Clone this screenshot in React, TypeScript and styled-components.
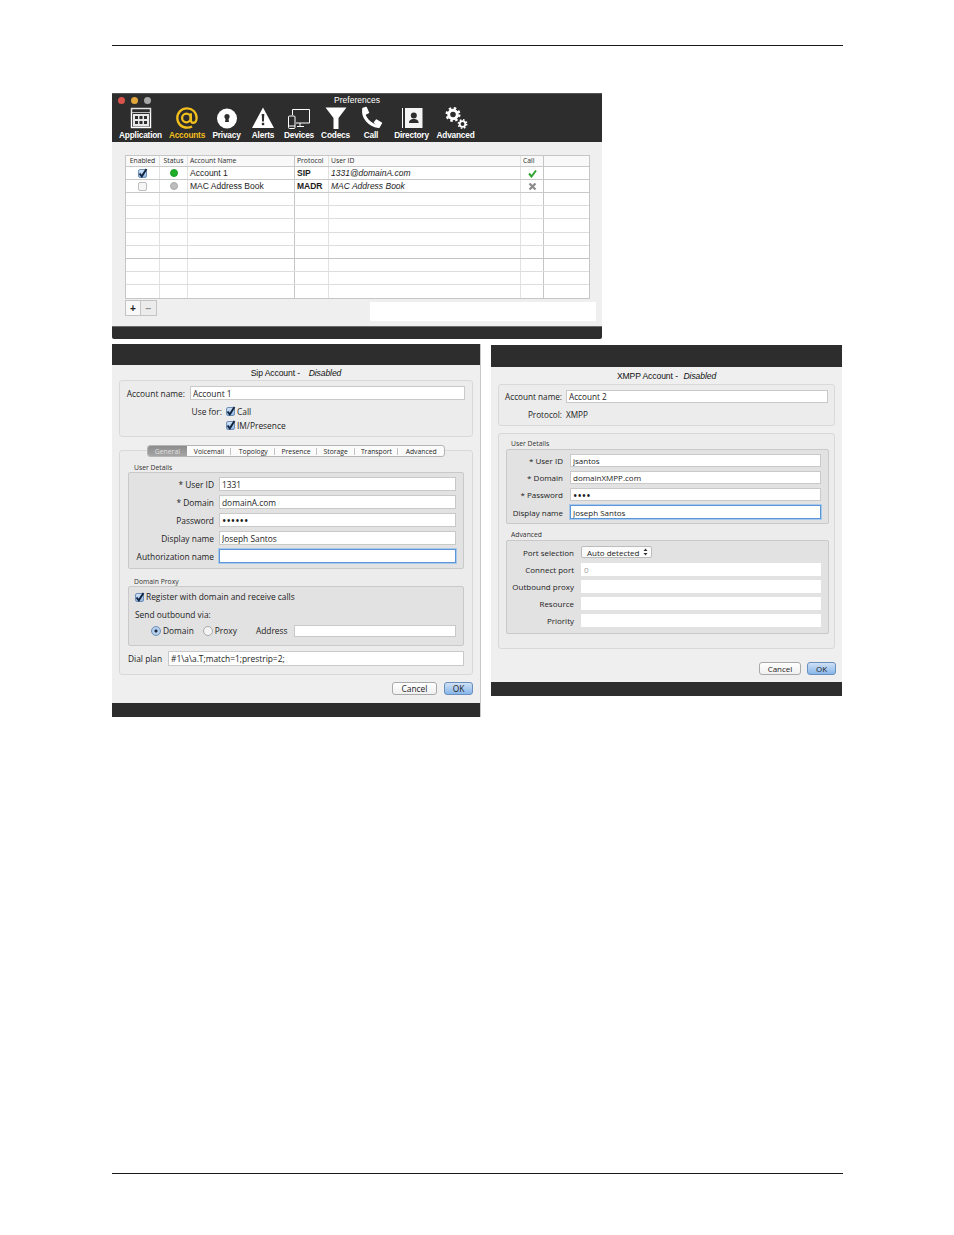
import React from 'react';
import styled, {createGlobalStyle} from 'styled-components';

const GlobalStyle = createGlobalStyle`
  html, body {
    margin: 0;
    padding: 0;
    background: #ffffff;
  }

  * {
    box-sizing: border-box;
  }
`

const uiFont = `"Open Sans", "Noto Sans", sans-serif`;
const headFont = `"Liberation Sans", Arial, sans-serif`;

function AtIcon() {
    return <svg width="24" height="24" viewBox="0 0 24 24" fill="none" stroke="#f2bf1d" strokeWidth="2.3">
        <circle cx="11.4" cy="12" r="4.3"/>
        <path d="M15.8 7.2v6.6c0 2 1 3 2.4 3 2 0 3.4-2 3.4-5C21.6 6.4 17.3 2.3 12 2.3 6.5 2.3 2.3 6.6 2.3 12S6.5 21.7 12 21.7c2 0 3.7-.5 5-1.3"/>
    </svg>;
}

function ApplicationIcon() {
    return <svg width="24" height="24" viewBox="0 0 24 24">
        <rect x="2.5" y="2.5" width="19" height="19" fill="none" stroke="#fff" strokeWidth="1.4"/>
        <rect x="2.5" y="2.5" width="19" height="4" fill="none" stroke="#ddd" strokeWidth="0.8"/>
        <rect x="4" y="8" width="16" height="12.5" fill="#e8e8e8"/>
        {[6, 10.5, 15].map((x) => [10, 15].map((y) =>
            <rect key={x + "-" + y} x={x} y={y} width="3" height="3" fill="#2d2d2d"/>))}
    </svg>;
}

function PrivacyIcon() {
    return <svg width="24" height="24" viewBox="0 0 24 24">
        <circle cx="12" cy="12.5" r="10" fill="#fff"/>
        <circle cx="12" cy="10.5" r="2.6" fill="#2d2d2d"/>
        <path d="M10.8 11h2.4l.8 5h-4z" fill="#2d2d2d"/>
    </svg>;
}

function AlertIcon() {
    return <svg width="24" height="24" viewBox="0 0 24 24">
        <path d="M12 1.5 23 22H1z" fill="#fff"/>
        <path d="M10.7 8h2.6l-.4 7.500h-1.800z" fill="#2d2d2d"/>
        <rect x="10.800" y="16.800" width="2.400" height="2.400" fill="#2d2d2d"/>
    </svg>;
}

function DevicesIcon() {
    return <svg width="24" height="24" viewBox="0 0 24 24" fill="none" stroke="#fff" strokeWidth="1">
        <path d="M5.500 9V3.500h17v13.500H9"/>
        <path d="M13 17v3M10 20.500h7"/>
        <rect x="1.500" y="10" width="6.500" height="12.500" rx="1" fill="#2d2d2d"/>
        <path d="M1.500 20h6.500"/>
    </svg>;
}

function FunnelIcon() {
    return <svg width="24" height="24" viewBox="0 0 24 24">
        <path d="M1.500 1.500h21L14.500 12v11h-5V12z" fill="#fff"/>
    </svg>;
}

function PhoneIcon() {
    return <svg width="24" height="24" viewBox="0 0 24 24" fill="none" stroke="#fff" strokeLinecap="round">
        <path d="M4.800 3.500C3.500 11 10 19 19.500 20.500" strokeWidth="3.200"/>
        <path d="M4 2.500l3.200-1 2.300 5.200-3.200 1.500z" fill="#fff" strokeWidth="1.400" strokeLinejoin="round"/>
        <path d="M15.500 16.500l2-2.500 5 3-2 3.500z" fill="#fff" strokeWidth="1.400" strokeLinejoin="round"/>
    </svg>;
}

function DirectoryIcon() {
    return <svg width="24" height="24" viewBox="0 0 24 24">
        <rect x="2" y="2" width="1" height="20" fill="#fff"/>
        <rect x="5" y="2" width="17.500" height="20" fill="#f4f4f4"/>
        <circle cx="13.800" cy="9.500" r="3" fill="#2d2d2d"/>
        <path d="M9 17c0-3 2-4 4.800-4s4.800 1 4.800 4z" fill="#2d2d2d"/>
    </svg>;
}

function GearsIcon() {
    return <svg width="24" height="24" viewBox="0 0 24 24" fill="none" stroke="#fff">
        <circle cx="9" cy="8.500" r="4.300" strokeWidth="3"/>
        <circle cx="9" cy="8.500" r="6.400" strokeWidth="2.200" strokeDasharray="2.500 2.530"/>
        <circle cx="18.500" cy="18" r="2.800" strokeWidth="1.800"/>
        <circle cx="18.500" cy="18" r="4.200" strokeWidth="1.500" strokeDasharray="1.650 1.650"/>
    </svg>;
}

function CheckMark() {
    return <svg width="11" height="11" viewBox="0 0 11 11" fill="none" stroke="#12233f" strokeWidth="1.900">
        <path d="M2.500 5.500 4.800 8.300 9.500 1"/>
    </svg>;
}

function UpDownArrows() {
    return <svg width="5" height="8" viewBox="0 0 5 8" fill="#333333">
        <path d="M2.500 0.500 4.500 3H.5zM2.500 7.500 .5 5h4z"/>
    </svg>;
}

const tools = [
    {label: "Application", width: 47, icon: <ApplicationIcon/>},
    {label: "Accounts", width: 46, icon: <AtIcon/>, active: true},
    {label: "Privacy", width: 33, icon: <PrivacyIcon/>},
    {label: "Alerts", width: 40, icon: <AlertIcon/>},
    {label: "Devices", width: 32, icon: <DevicesIcon/>},
    {label: "Codecs", width: 41, icon: <FunnelIcon/>},
    {label: "Call", width: 30, icon: <PhoneIcon/>},
    {label: "Directory", width: 51, icon: <DirectoryIcon/>},
    {label: "Advanced", width: 37, icon: <GearsIcon/>},
];

const tabs = [
    {label: "General", width: 39},
    {label: "Voicemail", width: 45},
    {label: "Topology", width: 44},
    {label: "Presence", width: 42},
    {label: "Storage", width: 38},
    {label: "Transport", width: 44},
    {label: "Advanced", width: 46},
];

const emptyRowHeights = [13, 13, 14, 13, 13, 13, 13, 14];

function StatusCells(props: { name: string, protocol: string, user: string, enabled: boolean }) {
    return <>
        <Cell $center><CheckBox $checked={props.enabled}>{props.enabled && <CheckMark/>}</CheckBox></Cell>
        <Cell $center><StatusDot $on={props.enabled}/></Cell>
        <Cell>{props.name}</Cell>
        <Cell $bold>{props.protocol}</Cell>
        <Cell $italic>{props.user}</Cell>
        <Cell $center>
            {props.enabled
                ? <svg width="9" height="9" viewBox="0 0 9 9" fill="none" stroke="#2fa52f" strokeWidth="2">
                    <path d="M1 4.500 3.500 7.500 8 1.500"/>
                </svg>
                : <svg width="9" height="9" viewBox="0 0 9 9" fill="none" stroke="#8b8b8b" strokeWidth="2.200">
                    <path d="M1.500 1.500 7.500 7.500M7.500 1.500 1.500 7.500"/>
                </svg>}
        </Cell>
        <Cell/>
    </>;
}

export default function App() {
    return <>
        <GlobalStyle/>
        <Page>
            <Rule/>
            <PrefsWindow>
                <PrefsHeader>
                    <TitleBar>
                        <Lights>
                            <Light $color="#d9534a"/>
                            <Light $color="#e0a63c"/>
                            <Light $color="#a8a8a8"/>
                        </Lights>
                        <span>Preferences</span>
                    </TitleBar>
                    <Toolbar>
                        {tools.map((tool) =>
                            <Tool key={tool.label} $width={tool.width} $active={tool.active}>
                                {tool.icon}
                                <span>{tool.label}</span>
                            </Tool>)}
                    </Toolbar>
                </PrefsHeader>
                <PrefsBody>
                    <AccountTable>
                        <TableRow $height={11}>
                            <HeadCell $center>Enabled</HeadCell>
                            <HeadCell $center>Status</HeadCell>
                            <HeadCell>Account Name</HeadCell>
                            <HeadCell>Protocol</HeadCell>
                            <HeadCell>User ID</HeadCell>
                            <HeadCell>Call</HeadCell>
                            <HeadCell/>
                        </TableRow>
                        <TableRow $height={13}>
                            <StatusCells enabled name="Account 1" protocol="SIP" user="1331@domainA.com"/>
                        </TableRow>
                        <TableRow $height={13}>
                            <StatusCells enabled={false} name="MAC Address Book" protocol="MADR"
                                         user="MAC Address Book"/>
                        </TableRow>
                        {emptyRowHeights.map((height, i) =>
                            <TableRow key={i} $height={height} $strong={i === 4}>
                                <Cell/><Cell/><Cell/><Cell/><Cell/><Cell/><Cell/>
                            </TableRow>)}
                    </AccountTable>
                    <TableFooter>
                        <AddRemove>
                            <SquareButton>+</SquareButton>
                            <SquareButton $muted>−</SquareButton>
                        </AddRemove>
                        <BlankedOut/>
                    </TableFooter>
                </PrefsBody>
                <WindowFooter/>
            </PrefsWindow>

            <DialogRow>
                <SipWindow>
                    <DarkBar $height={21}/>
                    <DialogBody $size={8.4}>
                        <DialogTitle $height={15} $gap={4}>Sip Account -&nbsp; <em>Disabled</em></DialogTitle>
                        <SipNameGroup>
                            <SipNameRow>
                                <FieldLabel>Account name:</FieldLabel>
                                <TextBox readOnly defaultValue="Account 1"/>
                            </SipNameRow>
                            <UseForRow>
                                <FieldLabel>Use for:</FieldLabel>
                                <CheckLine>
                                    <CheckBox $checked><CheckMark/></CheckBox>
                                    <span>Call</span>
                                </CheckLine>
                            </UseForRow>
                            <UseForRow>
                                <span/>
                                <CheckLine>
                                    <CheckBox $checked><CheckMark/></CheckBox>
                                    <span>IM/Presence</span>
                                </CheckLine>
                            </UseForRow>
                        </SipNameGroup>
                        <TabGroup>
                            <TabStrip>
                                {tabs.map((tab, i) =>
                                    <Tab key={tab.label} $width={tab.width} $selected={i === 0}>{tab.label}</Tab>)}
                            </TabStrip>
                            <SectionLabel $indent={6} $top={6} $height={9}>User Details</SectionLabel>
                            <SipDetailsPanel>
                                <SipField>
                                    <FieldLabel>* User ID</FieldLabel>
                                    <TextBox readOnly defaultValue="1331"/>
                                </SipField>
                                <SipField>
                                    <FieldLabel>* Domain</FieldLabel>
                                    <TextBox readOnly defaultValue="domainA.com"/>
                                </SipField>
                                <SipField>
                                    <FieldLabel>Password</FieldLabel>
                                    <PasswordBox readOnly type="password" defaultValue="123456"/>
                                </SipField>
                                <SipField>
                                    <FieldLabel>Display name</FieldLabel>
                                    <TextBox readOnly defaultValue="Joseph Santos"/>
                                </SipField>
                                <SipField>
                                    <FieldLabel>Authorization name</FieldLabel>
                                    <TextBox readOnly $focused/>
                                </SipField>
                            </SipDetailsPanel>
                            <SectionLabel $indent={6} $top={8} $height={9}>Domain Proxy</SectionLabel>
                            <ProxyPanel>
                                <ProxyLine>
                                    <CheckBox $checked><CheckMark/></CheckBox>
                                    <PlainText>Register with domain and receive calls</PlainText>
                                </ProxyLine>
                                <PlainText>Send outbound via:</PlainText>
                                <RadioLine>
                                    <Radio $selected/>
                                    <PlainText>Domain</PlainText>
                                    <Radio/>
                                    <PlainText>Proxy</PlainText>
                                    <AddressLabel>Address</AddressLabel>
                                    <TextBox readOnly/>
                                </RadioLine>
                            </ProxyPanel>
                            <DialPlanRow>
                                <PlainText>Dial plan</PlainText>
                                <TextBox readOnly defaultValue="#1\a\a.T;match=1;prestrip=2;"/>
                            </DialPlanRow>
                        </TabGroup>
                        <ButtonRow $top={7} $bottom={8} $right={7} $gap={7}>
                            <DialogButton $width={45}>Cancel</DialogButton>
                            <DialogButton $width={29} $primary>OK</DialogButton>
                        </ButtonRow>
                    </DialogBody>
                    <DarkBar $height={14}/>
                </SipWindow>

                <XmppWindow>
                    <DarkBar $height={22}/>
                    <DialogBody $size={8}>
                        <DialogTitle $height={17} $gap={1}>XMPP Account -&nbsp; <em>Disabled</em></DialogTitle>
                        <XmppNameGroup>
                            <XmppNameRow>
                                <FieldLabel>Account name:</FieldLabel>
                                <TextBox readOnly defaultValue="Account 2"/>
                            </XmppNameRow>
                            <XmppNameRow>
                                <FieldLabel>Protocol:</FieldLabel>
                                <PlainText>XMPP</PlainText>
                            </XmppNameRow>
                        </XmppNameGroup>
                        <XmppGroup>
                            <SectionLabel $indent={5} $top={5} $height={10}>User Details</SectionLabel>
                            <XmppDetailsPanel>
                                <XmppField>
                                    <FieldLabel>* User ID</FieldLabel>
                                    <TextBox readOnly defaultValue="jsantos"/>
                                </XmppField>
                                <XmppField>
                                    <FieldLabel>* Domain</FieldLabel>
                                    <TextBox readOnly defaultValue="domainXMPP.com"/>
                                </XmppField>
                                <XmppField>
                                    <FieldLabel>* Password</FieldLabel>
                                    <PasswordBox readOnly type="password" defaultValue="1234"/>
                                </XmppField>
                                <XmppField>
                                    <FieldLabel>Display name</FieldLabel>
                                    <TextBox readOnly $focused defaultValue="Joseph Santos"/>
                                </XmppField>
                            </XmppDetailsPanel>
                            <SectionLabel $indent={5} $top={6} $height={10}>Advanced</SectionLabel>
                            <XmppAdvancedPanel>
                                <AdvancedField>
                                    <FieldLabel>Port selection</FieldLabel>
                                    <SelectBox>Auto detected <UpDownArrows/></SelectBox>
                                </AdvancedField>
                                <AdvancedField>
                                    <FieldLabel>Connect port</FieldLabel>
                                    <FlatBox readOnly defaultValue="0"/>
                                </AdvancedField>
                                <AdvancedField>
                                    <FieldLabel>Outbound proxy</FieldLabel>
                                    <FlatBox readOnly/>
                                </AdvancedField>
                                <AdvancedField>
                                    <FieldLabel>Resource</FieldLabel>
                                    <FlatBox readOnly/>
                                </AdvancedField>
                                <AdvancedField>
                                    <FieldLabel>Priority</FieldLabel>
                                    <FlatBox readOnly/>
                                </AdvancedField>
                            </XmppAdvancedPanel>
                        </XmppGroup>
                        <ButtonRow $top={13} $bottom={7} $right={6} $gap={6}>
                            <DialogButton $width={42}>Cancel</DialogButton>
                            <DialogButton $width={29} $primary>OK</DialogButton>
                        </ButtonRow>
                    </DialogBody>
                    <DarkBar $height={14}/>
                </XmppWindow>
            </DialogRow>
            <Spacer/>
            <Rule/>
        </Page>
    </>;
}

const Page = styled.div`
  width: 954px;
  height: 1235px;
  padding: 45px 111px 61px 112px;
  display: flex;
  flex-direction: column;
  background: #ffffff;
  color: #1c1c1c;
`

const Rule = styled.div`
  height: 1px;
  background: #1a1a1a;
  flex: none;
`

const Spacer = styled.div`
  flex: 1;
`

const PrefsWindow = styled.section`
  width: 490px;
  margin-top: 47px;
  display: flex;
  flex-direction: column;
`

const PrefsHeader = styled.header`
  height: 49px;
  background: #2d2d2d;
  border-top: 1px solid #555555;
  color: #ffffff;
  font-family: ${headFont};
`

const TitleBar = styled.div`
  height: 12px;
  display: grid;
  grid-template-columns: 1fr auto 1fr;
  align-items: center;
  padding-top: 1px;
  font-size: 8.5px;
  line-height: 11px;
  text-align: center;
`

const Lights = styled.div`
  display: flex;
  gap: 6px;
  padding-left: 6px;
`

const Light = styled.span<{ $color: string }>`
  width: 7px;
  height: 7px;
  border-radius: 50%;
  background: ${(p) => p.$color};
`

const Toolbar = styled.nav`
  display: flex;
  padding-left: 5px;
`

const Tool = styled.div<{ $width: number, $active?: boolean }>`
  width: ${(p) => p.$width}px;
  display: flex;
  flex-direction: column;
  align-items: center;
  color: ${(p) => p.$active ? "#f2bf1d" : "#ffffff"};
  font-size: 8.3px;
  font-weight: 700;
  line-height: 11px;
  letter-spacing: -0.2px;
  white-space: nowrap;
`

const PrefsBody = styled.div`
  height: 184px;
  padding: 13px 6px 0 13px;
  background: #efefef;
`

const AccountTable = styled.div`
  width: 465px;
  border: 1px solid #c6c6c6;
  background: #ffffff;
  font-family: ${headFont};
`

const TableRow = styled.div<{ $height: number, $strong?: boolean }>`
  height: ${(p) => p.$height}px;
  display: grid;
  grid-template-columns: 34px 28px 107px 34px 192px 23px 1fr;
  border-bottom: 1px solid ${(p) => p.$strong ? "#c4c4c4" : "#dddddd"};

  &:nth-child(-n+3) {
    border-bottom-color: #c9c9c9;
  }

  &:last-child {
    height: ${(p) => p.$height - 1}px;
    border-bottom: none;
  }

  & > *:nth-child(3), & > *:nth-child(6) {
    border-right-color: #c6c6c6;
  }

  & > *:last-child {
    border-right: none;
  }
`

const Cell = styled.div<{ $center?: boolean, $bold?: boolean, $italic?: boolean }>`
  min-width: 0;
  padding: 0 ${(p) => p.$center ? 0 : 2}px;
  display: flex;
  align-items: center;
  justify-content: ${(p) => p.$center ? "center" : "flex-start"};
  border-right: 1px solid #e2e2e2;
  font-size: 8.5px;
  font-weight: ${(p) => p.$bold ? 700 : 400};
  font-style: ${(p) => p.$italic ? "italic" : "normal"};
  white-space: nowrap;
`

const HeadCell = styled(Cell)`
  padding-bottom: 1px;
  font-family: ${uiFont};
  font-size: 6.8px;
  color: #2c2c2c;
  background: #f9f9f9;
`

const StatusDot = styled.span<{ $on: boolean }>`
  width: 8px;
  height: 8px;
  border-radius: 50%;
  background: ${(p) => p.$on ? "#1fae2a" : "#bdbdbd"};
  border: 1px solid ${(p) => p.$on ? "#1c9c26" : "#a9a9a9"};
`

const TableFooter = styled.div`
  display: flex;
  justify-content: space-between;
  align-items: flex-start;
  margin-top: 1px;
`

const AddRemove = styled.div`
  display: flex;
  border: 1px solid #c4c4c4;
  height: 16px;
`

const SquareButton = styled.div<{ $muted?: boolean }>`
  width: 15px;
  display: flex;
  align-items: center;
  justify-content: center;
  border-right: 1px solid #c4c4c4;
  background: ${(p) => p.$muted ? "#ececec" : "#f8f8f8"};
  color: ${(p) => p.$muted ? "#8a8a8a" : "#222222"};
  font-family: ${headFont};
  font-size: 10px;
  font-weight: 700;

  &:last-child {
    border-right: none;
  }
`

const BlankedOut = styled.div`
  width: 226px;
  height: 19px;
  margin-top: 2px;
  background: #ffffff;
`

const WindowFooter = styled.footer`
  height: 13px;
  background: #2d2d2d;
  border-top: 1px solid #6b6b6b;
  border-radius: 0 0 2px 2px;
`

const DialogRow = styled.div`
  display: flex;
  align-items: flex-start;
  gap: 10px;
  margin-top: 5px;
`

const SipWindow = styled.section`
  width: 369px;
  display: flex;
  flex-direction: column;
  border-right: 1px solid #c9c9c9;
`

const XmppWindow = styled.section`
  width: 351px;
  margin-top: 1px;
  display: flex;
  flex-direction: column;
`

const DarkBar = styled.div<{ $height: number }>`
  height: ${(p) => p.$height}px;
  background: #2d2d2d;
`

const DialogBody = styled.div<{ $size: number }>`
  background: #efefef;
  font-family: ${uiFont};
  font-size: ${(p) => p.$size}px;
`

const DialogTitle = styled.div<{ $height: number, $gap: number }>`
  height: ${(p) => p.$height}px;
  display: flex;
  align-items: center;
  justify-content: center;
  white-space: pre;
  font-family: ${headFont};
  font-size: 8.6px;
  letter-spacing: -0.1px;
  color: #111111;

  em {
    margin-left: ${(p) => p.$gap}px;
  }
`

const GroupBox = styled.div`
  border: 1px solid #d9d9d9;
  border-radius: 3px;
  background: #ececec;
`

const SipNameGroup = styled(GroupBox)`
  height: 57px;
  margin: 0 7px;
  padding: 5px 7px 0 0;
`

const SipNameRow = styled.div`
  display: grid;
  grid-template-columns: 65px 1fr;
  gap: 5px;
  align-items: center;
  height: 14px;
`

const UseForRow = styled.div`
  display: grid;
  grid-template-columns: 102px 1fr;
  gap: 4px;
  align-items: center;
  height: 14px;

  ${SipNameRow} + & {
    margin-top: 4px;
  }
`

const FieldLabel = styled.span`
  text-align: right;
  white-space: nowrap;
  color: #1c1c1c;
`

const PlainText = styled.span`
  white-space: nowrap;
  color: #1c1c1c;
`

const TextBox = styled.input<{ $focused?: boolean }>`
  width: 100%;
  height: 100%;
  min-width: 0;
  margin: 0;
  padding: 0 2px;
  border: 1px solid ${(p) => p.$focused ? "#5d96d6" : "#c9c9c9"};
  box-shadow: ${(p) => p.$focused ? "0 0 0 1px #a9c9ec" : "none"};
  background: #ffffff;
  outline: none;
  color: #1c1c1c;
  font-family: ${uiFont};
  font-size: inherit;
`

const PasswordBox = styled(TextBox)`
  font-size: 11.7px;
`

const FlatBox = styled(TextBox)`
  border-color: #ffffff;
  color: #9a9a9a;
`

const CheckBox = styled.span<{ $checked?: boolean }>`
  flex: none;
  width: 9px;
  height: 9px;
  display: inline-flex;
  align-items: center;
  justify-content: center;
  border: 1px solid ${(p) => p.$checked ? "#6f8fb5" : "#bdbdbd"};
  border-radius: 2px;
  background: ${(p) => p.$checked ? "linear-gradient(#cfe2f6, #8fb8e4)" : "#f6f6f6"};

  svg {
    flex: none;
  }
`

const CheckLine = styled.div`
  display: flex;
  align-items: center;
  gap: 2px;
`

const TabGroup = styled(GroupBox)`
  margin: 13px 7px 0;
  padding: 0 8px 8px 8px;
`

const TabStrip = styled.div`
  width: 298px;
  height: 12px;
  margin: -6px auto 0;
  display: flex;
  border: 1px solid #b5b5b5;
  border-radius: 3px;
  background: #fbfbfb;
  overflow: hidden;
`

const Tab = styled.div<{ $width: number, $selected?: boolean }>`
  width: ${(p) => p.$width}px;
  display: flex;
  align-items: center;
  justify-content: center;
  background: ${(p) => p.$selected
    ? "linear-gradient(#8c8c8c, #a5a5a5)"
    : "linear-gradient(#c4c4c4, #c4c4c4) right center / 1px 7px no-repeat"};
  color: ${(p) => p.$selected ? "#e3e3e3" : "#262626"};
  font-size: 6.8px;
  white-space: nowrap;

  &:last-child {
    background: none;
  }
`

const SectionLabel = styled.div<{ $indent: number, $top: number, $height: number }>`
  height: ${(p) => p.$height}px;
  margin-top: ${(p) => p.$top}px;
  padding-left: ${(p) => p.$indent}px;
  line-height: ${(p) => p.$height}px;
  font-size: 6.8px;
  color: #333333;
`

const InsetPanel = styled.div`
  border: 1px solid #c9c9c9;
  border-radius: 2px;
  background: #e2e2e2;
`

const SipDetailsPanel = styled(InsetPanel)`
  padding: 4px 7px 5px 0;
  display: flex;
  flex-direction: column;
  gap: 4px;
`

const SipField = styled.div`
  display: grid;
  grid-template-columns: 85px 1fr;
  grid-template-rows: 100%;
  gap: 5px;
  align-items: center;
  height: 14px;
`

const ProxyPanel = styled(InsetPanel)`
  height: 60px;
  padding: 4px 7px 0 6px;
  display: flex;
  flex-direction: column;
  gap: 6px;
  line-height: 12px;
`

const ProxyLine = styled.div`
  display: flex;
  align-items: center;
  gap: 2px;
  height: 12px;
`

const RadioLine = styled.div`
  display: flex;
  align-items: center;
  height: 12px;
  margin-top: -2px;
  padding-left: 16px;
  gap: 2px;

  & > :nth-child(3) {
    margin-left: 7px;
  }
`

const Radio = styled.span<{ $selected?: boolean }>`
  flex: none;
  width: 10px;
  height: 10px;
  border-radius: 50%;
  border: 1px solid ${(p) => p.$selected ? "#6f8fb5" : "#a8a8a8"};
  background: ${(p) => p.$selected
    ? "radial-gradient(circle, #1b2a44 0 1.3px, #b4cfee 1.8px)"
    : "#f4f4f4"};
`

const AddressLabel = styled(PlainText)`
  margin: 0 4px 0 17px;
`

const DialPlanRow = styled.div`
  display: grid;
  grid-template-columns: 34px 1fr;
  gap: 6px;
  align-items: center;
  height: 15px;
  margin-top: 5px;
`

const ButtonRow = styled.div<{ $top: number, $bottom: number, $right: number, $gap: number }>`
  display: flex;
  justify-content: flex-end;
  gap: ${(p) => p.$gap}px;
  padding: ${(p) => p.$top}px ${(p) => p.$right}px ${(p) => p.$bottom}px 0;
`

const DialogButton = styled.div<{ $width: number, $primary?: boolean }>`
  width: ${(p) => p.$width}px;
  height: 13px;
  display: flex;
  align-items: center;
  justify-content: center;
  border: 1px solid ${(p) => p.$primary ? "#6b8fbd" : "#a9a9a9"};
  border-radius: 3px;
  background: ${(p) => p.$primary ? "linear-gradient(#cfe1f5, #88b6ea)" : "linear-gradient(#ffffff, #f0f0f0)"};
  color: #1c1c1c;
`

const XmppNameGroup = styled(GroupBox)`
  height: 42px;
  margin: 0 7px;
  padding: 5px 6px 0 0;
  display: flex;
  flex-direction: column;
  gap: 5px;
  font-size: 8.2px;
`

const XmppNameRow = styled.div`
  display: grid;
  grid-template-columns: 63px 1fr;
  gap: 4px;
  align-items: center;
  height: 13px;
`

const XmppGroup = styled(GroupBox)`
  margin: 7px 7px 0;
  padding: 0 5px 14px 7px;
`

const XmppDetailsPanel = styled(InsetPanel)`
  padding: 4px 7px 4px 0;
  display: flex;
  flex-direction: column;
  gap: 4px;
`

const XmppField = styled.div`
  display: grid;
  grid-template-columns: 56px 1fr;
  grid-template-rows: 100%;
  gap: 7px;
  align-items: center;
  height: 13px;

  &:last-child {
    height: 14px;
  }
`

const XmppAdvancedPanel = styled(InsetPanel)`
  padding: 5px 7px 7px 0;
  display: flex;
  flex-direction: column;
  gap: 5px;
`

const AdvancedField = styled.div`
  display: grid;
  grid-template-columns: 67px 1fr;
  gap: 7px;
  align-items: center;
  height: 12px;
`

const SelectBox = styled.div`
  width: 71px;
  height: 12px;
  display: flex;
  align-items: center;
  justify-content: space-between;
  padding: 0 3px 0 5px;
  border: 1px solid #bcbcbc;
  border-radius: 2px;
  background: #fbfbfb;
  white-space: nowrap;
`
